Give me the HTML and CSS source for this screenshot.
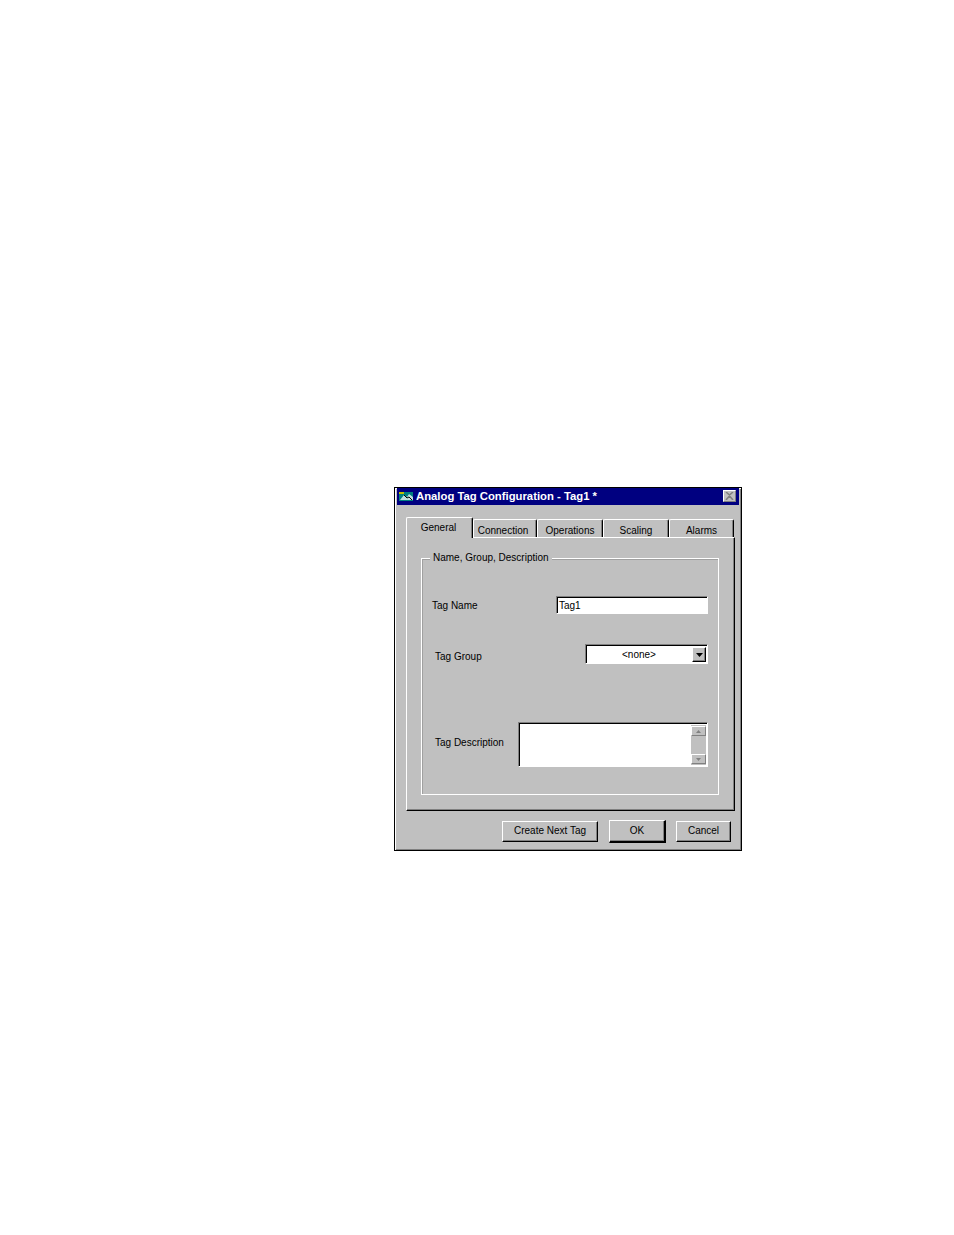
FILE: index.html
```html
<!DOCTYPE html>
<html lang="en">
<head>
<meta charset="UTF-8">
<title>Analog Tag Configuration</title>
<link rel="stylesheet" href="styles.css">
</head>
<body>
<div class="window">
    <div class="title-bar">
        <svg class="app-icon" width="14" height="9" viewBox="0 0 14 9">
            <rect width="14" height="9" fill="#008080"/>
            <path d="M0 0h5v2H0z" fill="#c0c000"/>
            <path d="M1 8l4-5 3 2 2-3 4 3v3H1z" fill="#c0e0e0"/>
            <path d="M5 3l3 3 2-1 3 3" fill="none" stroke="#000"/>
        </svg>
        <span class="title-text">Analog Tag Configuration - Tag1 *</span>
        <div class="close-btn">
            <svg width="9" height="8" viewBox="0 0 9 8"><path d="M1 0l3.5 3L8 0M1 8l3.5-4L8 8" fill="none" stroke="#808080" stroke-width="1.5"/></svg>
        </div>
    </div>

    <div class="tabs">
        <div class="tab active w-general">General</div>
        <div class="tab w-connection">Connection</div>
        <div class="tab w-operations">Operations</div>
        <div class="tab w-scaling">Scaling</div>
        <div class="tab w-alarms">Alarms</div>
    </div>

    <div class="panel">
        <div class="group">
            <span class="legend">Name, Group, Description</span>
            <div class="row row-name">
                <label>Tag Name</label>
                <div class="field input-name">Tag1</div>
            </div>
            <div class="row row-group">
                <label>Tag Group</label>
                <div class="field select-group">
                    <span class="select-value">&lt;none&gt;</span>
                    <div class="arrow-btn">
                        <svg width="7" height="4" viewBox="0 0 7 4"><path d="M0 0h7L3.5 4z" fill="#000"/></svg>
                    </div>
                </div>
            </div>
            <div class="row row-desc">
                <label>Tag Description</label>
                <div class="field textarea-desc">
                    <div class="scroll">
                        <div class="scroll-btn"><svg width="5" height="3" viewBox="0 0 5 3"><path d="M2.5 0L5 3H0z" fill="#808080"/></svg></div>
                        <div class="scroll-btn"><svg width="5" height="3" viewBox="0 0 5 3"><path d="M0 0h5L2.5 3z" fill="#808080"/></svg></div>
                    </div>
                </div>
            </div>
        </div>
    </div>

    <div class="buttons">
        <button class="btn btn-next">Create Next Tag</button>
        <button class="btn btn-ok">OK</button>
        <button class="btn btn-cancel">Cancel</button>
    </div>
</div>
</body>
</html>
```

FILE: styles.css
```css
* {
    box-sizing: border-box;
}

body {
    margin: 0;
    padding: 487px 0 0 394px;
    background-color: #fff;
    font-family: "Liberation Sans", Arial, sans-serif;
    font-size: 10px;
    color: #000;
}

.window {
    width: 348px;
    height: 364px;
    padding: 0 2px 2px 2px;
    background-color: #c0c0c0;
    border: 1px solid #000;
    box-shadow: inset 1px 1px 0 #fff, inset -1px -1px 0 #808080;
}

.title-bar {
    display: flex;
    align-items: center;
    height: 17px;
    padding: 0 3px 1px 2px;
    background-color: #000080;
    color: #fff;
}

.app-icon {
    margin-right: 3px;
}

.title-text {
    flex: 1;
    font-size: 11.3px;
    font-weight: bold;
}

.close-btn {
    display: flex;
    align-items: center;
    justify-content: center;
    width: 13px;
    height: 12px;
    background-color: #c0c0c0;
    border: 1px solid;
    border-color: #fff #808080 #808080 #fff;
}

.tabs {
    display: flex;
    align-items: flex-end;
    height: 32px;
    margin-left: 9px;
    position: relative;
    z-index: 1;
}

.tab {
    display: flex;
    align-items: center;
    justify-content: center;
    height: 18px;
    padding-top: 3px;
    background-color: #c0c0c0;
    border: 1px solid;
    border-color: #fff #000 transparent #fff;
    border-bottom: none;
    border-radius: 2px 2px 0 0;
    box-shadow: inset -1px 0 0 #808080;
}

.tab.active {
    height: 21px;
    margin-bottom: -1px;
    padding: 0 2px 1px 0;
}

.w-general { width: 67px; }
.w-connection { width: 64px; padding-right: 4px; }
.w-operations { width: 66px; }
.w-scaling { width: 66px; }
.w-alarms { width: 65px; }

.panel {
    width: 329px;
    height: 274px;
    margin-left: 9px;
    padding: 20px 15px 14px 14px;
    border: 1px solid;
    border-color: #fff #000 #000 #fff;
    box-shadow: inset -1px -1px 0 #808080;
}

.group {
    position: relative;
    height: 237px;
    padding: 0 10px;
    border: 1px solid #fff;
    box-shadow: inset 1px 1px 0 #a0a0a0;
}

.legend {
    position: absolute;
    top: -7px;
    left: 8px;
    padding: 0 3px;
    background-color: #c0c0c0;
}

.row {
    display: flex;
    align-items: center;
    justify-content: space-between;
}

.row-name {
    margin-top: 37px;
}

.row-group {
    margin-top: 30px;
    padding-left: 3px;
}

.row-group label {
    padding-top: 4px;
}

.row-desc {
    margin-top: 58px;
    padding-left: 3px;
}

.row-desc label {
    margin-bottom: 4px;
}

.field {
    background-color: #fff;
    border: 1px solid;
    border-color: #808080 #fff #fff #808080;
    box-shadow: inset 1px 1px 0 #000;
}

.input-name {
    width: 152px;
    height: 18px;
    padding: 3px 0 0 2px;
}

.select-group {
    display: flex;
    width: 123px;
    height: 20px;
    padding: 2px 1px 1px 2px;
}

.select-value {
    flex: 1;
    padding: 2px 2px 0 0;
    text-align: center;
}

.arrow-btn {
    display: flex;
    align-items: center;
    justify-content: center;
    width: 14px;
    background-color: #c0c0c0;
    border: 1px solid;
    border-color: #fff #000 #000 #fff;
    box-shadow: inset -1px -1px 0 #808080;
}

.textarea-desc {
    display: flex;
    justify-content: flex-end;
    width: 190px;
    height: 45px;
    padding: 2px 1px 1px 2px;
}

.scroll {
    display: flex;
    flex-direction: column;
    justify-content: space-between;
    width: 15px;
    padding: 1px 0;
    background-color: #c0c0c0;
}

.scroll-btn {
    display: flex;
    align-items: center;
    justify-content: center;
    height: 10px;
    background-color: #c0c0c0;
    border: 1px solid;
    border-color: #fff #808080 #808080 #fff;
}

.buttons {
    display: flex;
    align-items: center;
    margin-top: 9px;
    padding-left: 105px;
}

.btn {
    height: 21px;
    padding: 0 0 2px 0;
    font-family: inherit;
    font-size: 10px;
    background-color: #c0c0c0;
    border: 1px solid;
    border-color: #fff #000 #000 #fff;
    box-shadow: inset -1px -1px 0 #808080;
}

.btn-next {
    width: 96px;
}

.btn-ok {
    width: 57px;
    height: 23px;
    margin-left: 11px;
    border-width: 1px 2px 2px 1px;
}

.btn-cancel {
    width: 55px;
    margin-left: 10px;
}
```
